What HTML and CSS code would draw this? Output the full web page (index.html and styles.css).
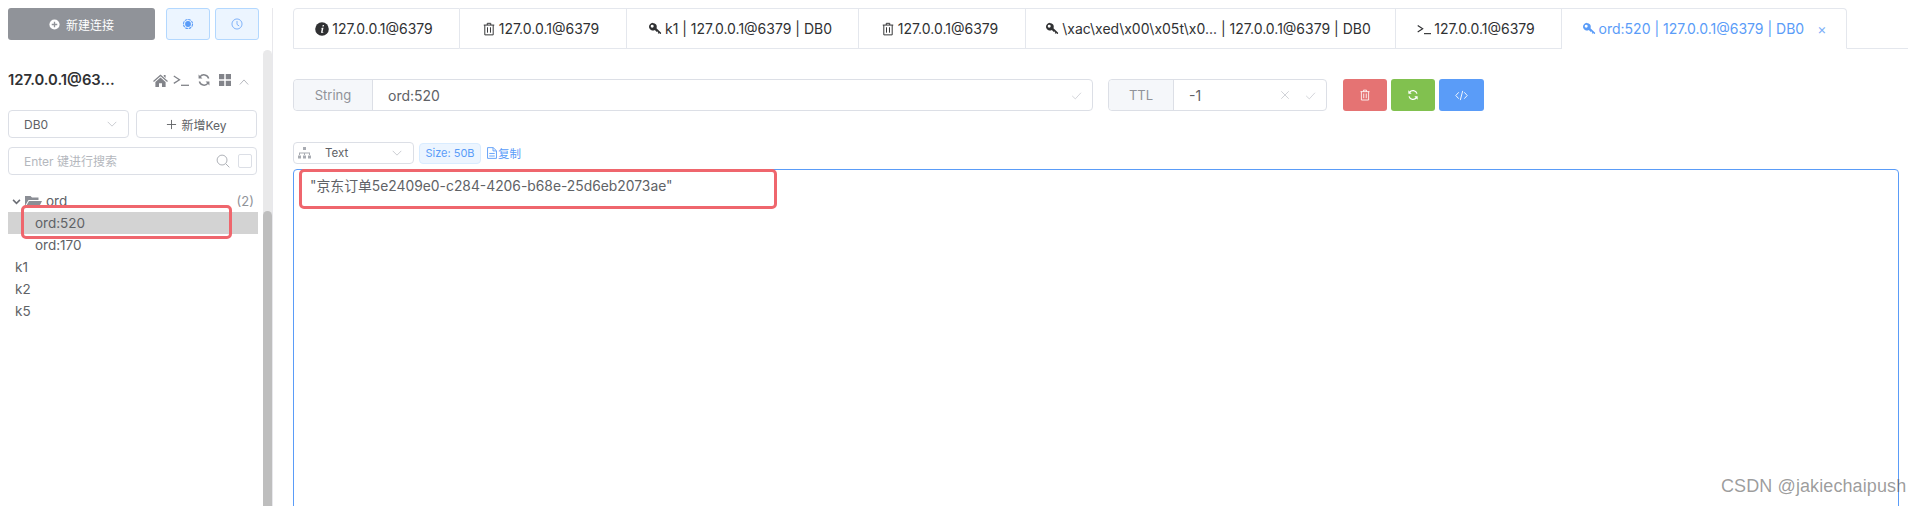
FILE: index.html
```html
<!DOCTYPE html>
<html lang="zh">
<head>
<meta charset="utf-8">
<title>Redis</title>
<link rel="stylesheet" href="styles.css">
</head>
<body>
<svg class="defs" aria-hidden="true">
  <symbol id="key" viewBox="0 0 16 16"><path d="M5.600 1a4.400 4.400 0 0 1 4.100 6l5.300 5.200-.1 1.200-1.100.2-.9-.9-.8.800-1-1 .7-.8-.9-.9-.8.7-2.300-2.300A4.400 4.400 0 1 1 5.600 1zm-.8 2.200a1.700 1.700 0 1 0 0 3.400 1.700 1.700 0 0 0 0-3.400z" fill="currentColor" fill-rule="evenodd"/></symbol>
  <symbol id="trash" viewBox="0 0 16 16"><path d="M2 3.500h12M6 3.500V1.500h4v2M3.200 3.500v11.200h9.600V3.500M6.300 6v6.200M9.700 6v6.200" fill="none" stroke="currentColor" stroke-width="1.100"/></symbol>
  <symbol id="term" viewBox="0 0 16 14"><path d="M.8 3 6.500 6.700.8 10.400" fill="none" stroke="currentColor" stroke-width="1.300"/><path d="M8 12.300h8" stroke="currentColor" stroke-width="1.300"/></symbol>
  <symbol id="sync" viewBox="0 0 16 16"><path d="M13.300 6.200A5.600 5.600 0 0 0 3.400 4.400M2.700 9.800a5.600 5.600 0 0 0 9.900 1.800" fill="none" stroke="currentColor" stroke-width="1.700"/><path d="M1.800 1.800v4.400h4.400zM14.200 14.200V9.800H9.800z" fill="currentColor"/></symbol>
  <symbol id="check" viewBox="0 0 14 14"><path d="M1.500 7.500 5.500 11.300 12.700 3.500" fill="none" stroke="currentColor" stroke-width="1"/></symbol>
  <symbol id="chev" viewBox="0 0 14 8"><path d="M1 1l6 6 6-6" fill="none" stroke="currentColor" stroke-width="1"/></symbol>
</svg>

<div class="app">
  <aside class="sidebar">
    <div class="side-body">
      <div class="top-actions">
        <button class="btn-new"><svg class="ic-plus" viewBox="0 0 14 14"><circle cx="7" cy="7" r="6.500" fill="#fff"/><path d="M3.500 7h7M7 3.500v7" stroke="#909399" stroke-width="1.700"/></svg><span>新建连接</span></button>
        <button class="btn-soft"><svg viewBox="0 0 14 14" class="ic-14"><circle cx="7" cy="7" r="3.400" fill="#5a9cf8"/><circle cx="7" cy="7" r="5.300" fill="none" stroke="#5a9cf8" stroke-width="1.300" stroke-dasharray="3.200 .9"/></svg></button>
        <button class="btn-soft"><svg viewBox="0 0 14 14" class="ic-14"><circle cx="7" cy="7" r="5.900" fill="none" stroke="#70a9f8" stroke-width="1"/><path d="M7 3.500V7.500L9.500 9.300" fill="none" stroke="#70a9f8" stroke-width="1"/></svg></button>
      </div>

      <div class="conn">
        <span class="conn-name">127.0.0.1@63...</span>
        <div class="conn-icons">
          <svg class="ci-home" viewBox="0 0 16 14"><path d="M8 .6 16 7.500l-.9 1L8 2.500.9 8.500 0 7.500zM2.500 8.600 8 3.900l5.500 4.700V14H9.600V10H6.400v4H2.500zM11.500 1.200h2v3l-2-1.700z" fill="#82848a"/></svg>
          <svg class="ci-term"><use href="#term"/></svg>
          <svg class="ci-sync"><use href="#sync"/></svg>
          <svg class="ci-grid" viewBox="0 0 13 13"><path d="M0 0h5.700v5.700H0zM7.300 0H13v5.700H7.300zM0 7.300h5.700V13H0zM7.300 7.300H13V13H7.300z" fill="#82848a"/></svg>
          <svg class="ci-up" viewBox="0 0 12 7"><path d="M1 6.500l5-5.500 5 5.500" fill="none" stroke="#a8abb2" stroke-width="1"/></svg>
        </div>
      </div>

      <div class="db-row">
        <div class="field db-select"><span>DB0</span><svg class="chev"><use href="#chev"/></svg></div>
        <div class="field add-key"><svg class="ic-add" viewBox="0 0 12 12"><path d="M6 1v10M1 6h10" stroke="#606266" stroke-width="1"/></svg><span>新增Key</span></div>
      </div>

      <div class="field search">
        <span class="ph">Enter 键进行搜索</span>
        <svg class="ic-search" viewBox="0 0 15 15"><circle cx="6.500" cy="6.500" r="5.300" fill="none" stroke="#a8abb2" stroke-width="1"/><path d="M10.500 10.500l3.800 3.800" stroke="#a8abb2" stroke-width="1"/></svg>
        <span class="checkbox"></span>
      </div>

      <ul class="tree">
        <li class="tree-row folder">
          <svg class="ic-caret" viewBox="0 0 10 7"><path d="M1 1l4 4 4-4" fill="none" stroke="#6b6e75" stroke-width="1.800"/></svg>
          <svg class="ic-folder" viewBox="0 0 17 13"><path d="M0 1h5.500l1.500 1.600h6.500V5H3.500L0 11zM4 6h13l-3.500 7H0z" fill="#8b8e95"/></svg>
          <span class="tree-label">ord</span>
          <span class="tree-count">(2)</span>
        </li>
        <li class="tree-row leaf selected">ord:520</li>
        <li class="tree-row leaf">ord:170</li>
        <li class="tree-row root">k1</li>
        <li class="tree-row root">k2</li>
        <li class="tree-row root">k5</li>
      </ul>
    </div>
    <div class="scrollbar"><div class="thumb"></div></div>
  </aside>

  <main class="main">
    <nav class="tabs">
      <div class="tab t1"><svg class="ic-tab" viewBox="0 0 14 14"><circle cx="7" cy="7" r="6.800" fill="#303133"/><path d="M7.700 3h1.300l-.3 1.400H7.400zM7 5.700h1.500L7.600 9.800c-.1.500.4.500.9.100l.2.400c-1 1-2.800 1.100-2.600-.3L6.800 6.500l-.9-.2z" fill="#fff"/></svg>127.0.0.1@6379</div>
      <div class="tab t2"><svg class="ic-tab"><use href="#trash"/></svg>127.0.0.1@6379</div>
      <div class="tab t3"><svg class="ic-tab"><use href="#key"/></svg>k1 | 127.0.0.1@6379 | DB0</div>
      <div class="tab t4"><svg class="ic-tab"><use href="#trash"/></svg>127.0.0.1@6379</div>
      <div class="tab t5"><svg class="ic-tab"><use href="#key"/></svg>\xac\xed\x00\x05t\x0... | 127.0.0.1@6379 | DB0</div>
      <div class="tab t6"><svg class="ic-tab"><use href="#term"/></svg>127.0.0.1@6379</div>
      <div class="tab t7 active"><svg class="ic-tab"><use href="#key"/></svg>ord:520 | 127.0.0.1@6379 | DB0<span class="tab-x">×</span></div>
      <div class="tabs-rest"></div>
    </nav>

    <section class="key-row">
      <div class="group group-key">
        <span class="prefix p-type">String</span>
        <span class="group-val">ord:520</span>
        <svg class="ic-check"><use href="#check"/></svg>
      </div>
      <div class="group group-ttl">
        <span class="prefix p-ttl">TTL</span>
        <span class="group-val">-1</span>
        <svg class="ic-x" viewBox="0 0 12 12"><path d="M1.500 1.500l9 9M10.500 1.500l-9 9" stroke="#c8cad0" stroke-width="1"/></svg>
        <svg class="ic-check"><use href="#check"/></svg>
      </div>
      <div class="actions">
        <button class="act red"><svg class="ic-act"><use href="#trash"/></svg></button>
        <button class="act green"><svg class="ic-act"><use href="#sync"/></svg></button>
        <button class="act blue"><svg class="ic-code" viewBox="0 0 14 12"><path d="M4 2.500.8 6 4 9.500M10 2.500 13.200 6 10 9.500M8.300 1 5.700 11" fill="none" stroke="#fff" stroke-width="1"/></svg></button>
      </div>
    </section>

    <section class="view-row">
      <div class="field view-select">
        <svg class="ic-tree" viewBox="0 0 13 12"><path d="M5 0h3v3H5zM0 8.500h3v3H0zM5 8.500h3v3H5zM10 8.500h3v3h-3zM1 8V5.500h11V8h-1V6.500H7V8H6V6.500H2V8z" fill="#a8abb2"/></svg>
        <span class="view-text">Text</span>
        <svg class="chev"><use href="#chev"/></svg>
      </div>
      <span class="size-tag">Size: 50B</span>
      <span class="copy"><svg class="ic-doc" viewBox="0 0 11 13"><path d="M.6.600h6.200l3.600 3.400v8.400H.6zM6.600.8v3.400h3.600M2.500 7h6M2.500 9.800h6" fill="none" stroke="#5a9cf8" stroke-width="1"/></svg>复制</span>
    </section>

    <div class="editor">"京东订单5e2409e0-c284-4206-b68e-25d6eb2073ae"</div>
  </main>
</div>

<div class="mark mark-tree"></div>
<div class="mark mark-value"></div>
<div class="watermark">CSDN @jakiechaipush</div>
</body>
</html>
```

FILE: styles.css
```css
* { box-sizing: border-box; }
html, body { margin: 0; height: 506px; overflow: hidden; background: #fff; }
body {
  font-family: Inter, "Noto Sans CJK SC", sans-serif;
  font-size: 14px;
  color: #606266;
  position: relative;
}
.defs { display: none; }
svg { display: block; flex: none; }
button { font: inherit; margin: 0; cursor: pointer; }

.app { display: flex; height: 506px; overflow: hidden; }

/* Sidebar */
.sidebar {
  width: 273px;
  flex: none;
  display: flex;
  margin-top: 8px;
  border-right: 1px solid #e8e8ec;
}
.side-body { width: 263px; padding-left: 8px; flex: none; }
.scrollbar { width: 9px; margin-top: 42px; background: #e9e9ea; border-radius: 5px 5px 0 0; padding-top: 161px; flex: none; overflow: hidden; }
.thumb { height: 295px; background: #bebebe; border-radius: 5px 5px 0 0; }

.top-actions { display: flex; height: 32px; }
.btn-new {
  width: 147px;
  background: #909399;
  border: 0;
  border-radius: 3px;
  color: #fff;
  font-size: 12px;
  display: flex;
  align-items: center;
  justify-content: center;
  gap: 6px;
}
.ic-plus { width: 11px; height: 11px; }
.btn-soft {
  width: 44px;
  margin-left: 5px;
  background: #ecf5ff;
  border: 1px solid #b3d8ff;
  border-radius: 3px;
  display: flex;
  align-items: center;
  justify-content: center;
}
.btn-new + .btn-soft { margin-left: 11px; }
.ic-14 { width: 12px; height: 12px; }

.conn { display: flex; align-items: center; height: 22px; margin-top: 29px; justify-content: space-between; width: 250px; }
.conn-name { font-size: 14.800px; font-weight: 600; color: #303133; }
.conn-icons { display: flex; align-items: center; margin-right: 9px; }
.ci-home { width: 15px; height: 13px; }
.ci-term { width: 16px; height: 14px; margin-left: 5px; color: #82848a; }
.ci-sync { width: 14px; height: 14px; margin-left: 8px; color: #82848a; }
.ci-grid { width: 12px; height: 12px; margin-left: 8px; }
.ci-up { width: 10px; height: 6px; margin-left: 8px; margin-top: 3px; }

.field { background: #fff; border: 1px solid #dcdfe6; border-radius: 4px; display: flex; align-items: center; }
.db-row { display: flex; gap: 7px; margin-top: 19px; }
.db-select { width: 121px; height: 28px; padding-left: 15px; font-size: 12px; justify-content: space-between; padding-right: 11px; }
.chev { width: 10px; height: 6px; color: #b6b9c0; }
.add-key { width: 121px; height: 28px; justify-content: center; font-size: 12px; gap: 4px; }
.ic-add { width: 11px; height: 11px; }

.search { width: 249px; height: 28px; margin-top: 9px; padding-left: 15px; padding-right: 4px; font-size: 12px; }
.ph { color: #b4b7bd; flex: 1; margin-top: -2px; }
.ic-search { width: 14px; height: 14px; margin-right: 8px; }
.checkbox { width: 14px; height: 14px; border: 1px solid #dcdfe6; border-radius: 2px; }

.tree { list-style: none; margin: 15px 0 0; padding: 0; width: 250px; font-size: 13.500px; }
.tree-row { height: 22px; display: flex; align-items: center; }
.folder { padding-left: 4px; }
.ic-caret { width: 9px; height: 6px; margin-top: 2px; }
.ic-folder { width: 17px; height: 13px; margin-left: 4px; }
.tree-label { margin-left: 4px; }
.tree-count { margin-left: auto; padding-right: 4px; color: #909399; font-size: 13px; }
.leaf { padding-left: 27px; }
.root { padding-left: 7px; }
.selected { background: #d3d3d3; }

/* Main */
.main { flex: 1; min-width: 0; padding: 8px 0 0 20px; overflow: hidden; }
.tabs { display: flex; height: 41px; font-size: 14px; color: #303133; }
.tab {
  display: flex;
  align-items: center;
  justify-content: center;
  border: 1px solid #e4e7ed;
  border-left: 0;
  gap: 3px;
  padding-right: 5px;
}
.t1 { width: 167px; border-left: 1px solid #e4e7ed; border-radius: 4px 0 0 0; }
.t2 { width: 167px; }
.t3 { width: 232px; }
.t4 { width: 167px; }
.t5 { width: 370px; }
.t6 { width: 166px; }
.t7 { width: 285px; padding-right: 0; }
.ic-tab { width: 14px; height: 14px; color: #303133; }
.active { color: #5a9cf8; border-bottom-color: #fff; border-radius: 0 4px 0 0; }
.active .ic-tab { color: #5a9cf8; }
.tab-x { font-size: 14px; margin-left: 10px; color: #7db0f8; }
.tabs-rest { flex: 1; margin-right: 11px; border-bottom: 1px solid #e4e7ed; }

.key-row { display: flex; margin-top: 30px; height: 32px; }
.group { display: flex; align-items: center; height: 32px; border: 1px solid #dcdfe6; border-radius: 4px; font-size: 14px; }
.group-key { width: 800px; }
.group-ttl { width: 219px; margin-left: 15px; }
.prefix { height: 100%; display: flex; align-items: center; justify-content: center; background: #f5f7fa; color: #909399; border-right: 1px solid #dcdfe6; border-radius: 4px 0 0 4px; font-size: 13px; }
.p-type { width: 79px; }
.p-ttl { width: 65px; }
.group-val { flex: 1; padding-left: 15px; }
.ic-check { width: 11px; height: 11px; margin-right: 10px; color: #c8cad0; }
.ic-x { width: 10px; height: 10px; margin-right: 15px; }
.actions { display: flex; gap: 4px; margin-left: 16px; }
.act { width: 44px; height: 32px; border: 0; border-radius: 3px; display: flex; align-items: center; justify-content: center; }
.red { background: #e57373; }
.green { background: #81c14f; }
.blue { background: #5a9cf8; width: 45px; }
.ic-act { width: 12px; height: 12px; color: #fff; }
.ic-code { width: 13px; height: 11px; }

.view-row { display: flex; align-items: center; margin-top: 31px; height: 22px; font-size: 12px; }
.view-select { width: 121px; height: 22px; padding: 0 11px 0 4px; font-size: 11.500px; }
.ic-tree { width: 13px; height: 12px; }
.view-text { margin-left: 14px; flex: 1; }
.size-tag { margin-left: 5px; width: 62px; height: 21px; display: flex; align-items: center; justify-content: center; background: #ecf5ff; border: 1px solid #d9ecff; border-radius: 4px; color: #5a9cf8; font-size: 11px; }
.copy { margin-left: 6px; display: flex; align-items: center; gap: 1px; color: #5a9cf8; font-size: 11.500px; }
.ic-doc { width: 10px; height: 12px; }

.editor {
  width: 1606px;
  height: 400px;
  margin-top: 5px;
  padding: 5px 0 0 16px;
  border: 1px solid #5a9cf8;
  border-radius: 4px;
  font-size: 13.850px;
  line-height: 22px;
  color: #606266;
}

/* Annotations drawn over the screenshot */
.mark { position: absolute; border: 3px solid #ef666d; border-radius: 5px; }
.mark-tree { left: 21px; top: 205px; width: 211px; height: 34px; }
.mark-value { left: 299px; top: 169px; width: 478px; height: 40px; }
.watermark { position: absolute; left: 1721px; top: 475px; font-family: "Liberation Sans", sans-serif; font-size: 18px; line-height: 22px; letter-spacing: .1px; color: rgba(90, 90, 90, .6); }
```
